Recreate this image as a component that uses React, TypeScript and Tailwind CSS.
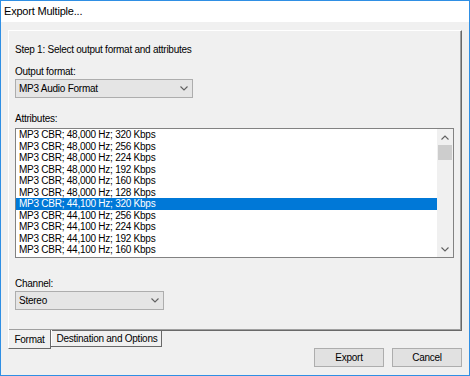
const ROWS = [
  "MP3 CBR; 48,000 Hz; 320 Kbps",
  "MP3 CBR; 48,000 Hz; 256 Kbps",
  "MP3 CBR; 48,000 Hz; 224 Kbps",
  "MP3 CBR; 48,000 Hz; 192 Kbps",
  "MP3 CBR; 48,000 Hz; 160 Kbps",
  "MP3 CBR; 48,000 Hz; 128 Kbps",
  "MP3 CBR; 44,100 Hz; 320 Kbps",
  "MP3 CBR; 44,100 Hz; 256 Kbps",
  "MP3 CBR; 44,100 Hz; 224 Kbps",
  "MP3 CBR; 44,100 Hz; 192 Kbps",
  "MP3 CBR; 44,100 Hz; 160 Kbps",
];

const SELECTED = 6;

function Chevron({ up = false, color = "#606060" }: { up?: boolean; color?: string }) {
  return (
    <svg width="8" height="5" viewBox="0 0 8 5" aria-hidden="true">
      <polyline
        points={up ? "0.5,4.5 4,1 7.5,4.5" : "0.5,0.5 4,4 7.5,0.5"}
        fill="none"
        stroke={color}
        strokeWidth="1.1"
      />
    </svg>
  );
}

function Combo({ value, width }: { value: string; width: string }) {
  return (
    <div
      className={`${width} mt-[1px] flex h-[19px] items-center justify-between border border-[#adadad] bg-[#e5e5e5] pl-[3px] pr-[4px]`}
    >
      <span>{value}</span>
      <Chevron />
    </div>
  );
}

export default function App() {
  return (
    <div className="flex h-[376px] w-[470px] flex-col border border-[#2f8fe4] bg-[#f0f0f0] font-['Liberation_Sans',Arial,sans-serif] text-[10px] leading-[13px] tracking-[-0.25px] text-black">
      {/* title bar */}
      <div className="flex h-[21px] items-center bg-white pl-[3px] text-[11px] tracking-[-0.2px]">
        Export Multiple...
      </div>

      <div className="flex flex-1 flex-col px-[7px] pt-[8px]">
        {/* tab page */}
        <div className="h-[301px] border-t border-l border-r border-b border-t-white border-l-white border-r-[#696969] border-b-[#696969] pl-[6px] pt-[12px] shadow-[inset_-1px_-1px_0_#a0a0a0]">
          <p>Step 1: Select output format and attributes</p>

          <p className="mt-[9px]">Output format:</p>
          <Combo value="MP3 Audio Format" width="w-[178px]" />

          <p className="mt-[14px]">Attributes:</p>
          <div className="mt-[3px] flex h-[130px] w-[439px] border border-[#828282] bg-white">
            <div className="flex-1">
              {ROWS.map((r, i) => (
                <div
                  key={r}
                  className={`h-[11.5px] pl-[3px] leading-[11.5px] ${
                    i === SELECTED ? "bg-[#0078d7] text-white" : ""
                  }`}
                >
                  {r}
                </div>
              ))}
            </div>
            {/* scrollbar */}
            <div className="flex w-[16px] flex-col bg-[#f0f0f0]">
              <div className="flex h-[16px] items-center justify-center">
                <Chevron up />
              </div>
              <div className="mx-[1px] h-[15px] bg-[#cdcdcd]" />
              <div className="flex-1" />
              <div className="flex h-[16px] items-center justify-center">
                <Chevron />
              </div>
            </div>
          </div>

          <p className="mt-[19px]">Channel:</p>
          <Combo value="Stereo" width="w-[149px]" />
        </div>

        {/* tabs + buttons */}
        <div className="-mt-[1px] flex">
          <div className="flex h-[19px] w-[43px] items-center justify-center border-l border-r border-b border-l-white border-r-[#696969] border-b-[#696969] bg-[#f0f0f0] pt-[1px]">
            Format
          </div>
          <div className="flex h-[17px] w-[111px] items-center justify-center border-r border-b border-[#696969] pl-[2px] shadow-[inset_1px_0_0_#ffffff]">
            Destination and Options
          </div>
          <div className="ml-auto mt-[18px] flex gap-[8px]">
            <button className="flex h-[19px] w-[70px] items-center justify-center border border-[#adadad] bg-[#e1e1e1]">
              Export
            </button>
            <button className="flex h-[19px] w-[70px] items-center justify-center border border-[#adadad] bg-[#e1e1e1]">
              Cancel
            </button>
          </div>
        </div>
      </div>
    </div>
  );
}
